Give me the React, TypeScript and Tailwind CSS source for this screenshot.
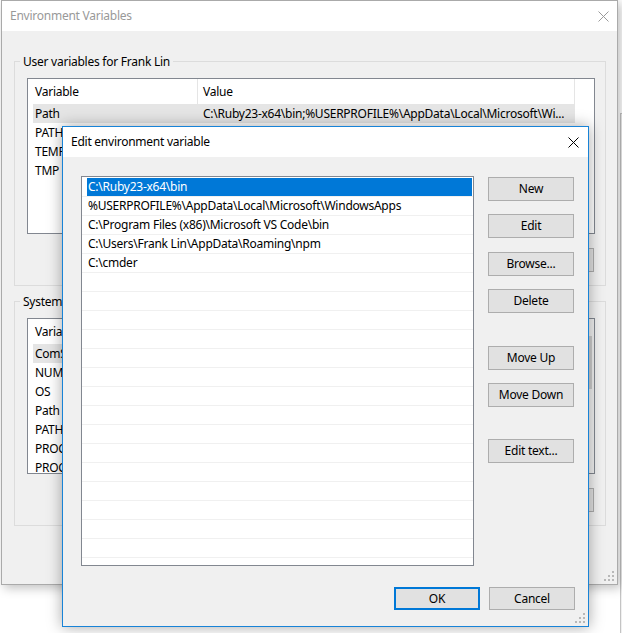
import type { ReactNode } from 'react';

const font = { fontFamily: '"Noto Sans", "Liberation Sans", sans-serif' };

const userVars = [
  ['Path', 'C:\\Ruby23-x64\\bin;%USERPROFILE%\\AppData\\Local\\Microsoft\\Wi...'],
  ['PATHEXT', '.COM;.EXE;.BAT;.CMD;.VBS;.VBE;.JS;.JSE;.WSF;.WSH;.MSC;.RB;.RBW'],
  ['TEMP', '%USERPROFILE%\\AppData\\Local\\Temp'],
  ['TMP', '%USERPROFILE%\\AppData\\Local\\Temp'],
];

const systemVars = [
  ['ComSpec', 'C:\\WINDOWS\\system32\\cmd.exe'],
  ['NUMBER_OF_PROCESSORS', '4'],
  ['OS', 'Windows_NT'],
  ['Path', 'C:\\ProgramData\\Oracle\\Java\\javapath;C:\\WINDOWS\\system32;...'],
  ['PATHEXT', '.COM;.EXE;.BAT;.CMD;.VBS;.VBE;.JS;.JSE;.WSF;.WSH;.MSC'],
  ['PROCESSOR_ARCHITECTURE', 'AMD64'],
  ['PROCESSOR_IDENTIFIER', 'Intel64 Family 6 Model 61 Stepping 4, GenuineIntel'],
];

const paths = [
  'C:\\Ruby23-x64\\bin',
  '%USERPROFILE%\\AppData\\Local\\Microsoft\\WindowsApps',
  'C:\\Program Files (x86)\\Microsoft VS Code\\bin',
  'C:\\Users\\Frank Lin\\AppData\\Roaming\\npm',
  'C:\\cmder',
];

const CloseIcon = ({ color }: { color: string }) => (
  <svg width="11" height="11" viewBox="0 0 11 11">
    <path d="M0.5 0.5 L10.5 10.5 M10.5 0.5 L0.5 10.5" stroke={color} strokeWidth="1" />
  </svg>
);

const Grip = () => (
  <svg width="11" height="11" viewBox="0 0 11 11" className="absolute right-[2px] bottom-[2px]">
    <rect x="8" y="0" width="2" height="2" fill="#b8b8b8" />
    <rect x="4" y="4" width="2" height="2" fill="#b8b8b8" />
    <rect x="8" y="4" width="2" height="2" fill="#b8b8b8" />
    <rect x="0" y="8" width="2" height="2" fill="#b8b8b8" />
    <rect x="4" y="8" width="2" height="2" fill="#b8b8b8" />
    <rect x="8" y="8" width="2" height="2" fill="#b8b8b8" />
  </svg>
);

const WinButton = ({ children, primary, className = '' }: { children: ReactNode; primary?: boolean; className?: string }) => (
  <button
    className={`flex w-[86px] items-center justify-center bg-[#e1e1e1] text-[12px] text-black ${
      primary ? 'border-2 border-[#0078d7]' : 'border border-[#adadad]'
    } ${className}`}
  >
    {children}
  </button>
);

const VarList = ({ rows, scrollbar }: { rows: string[][]; scrollbar?: boolean }) => (
  <div className="relative flex h-[156px] w-[568px] overflow-hidden border border-[#828790] bg-white">
    <div className="flex-1">
      <div className="flex h-[25px] items-center">
        <div className="flex h-full w-[170px] items-center border-r border-[#e5e5e5] pl-[7px]">Variable</div>
        <div className="flex h-full w-[377px] items-center border-r border-[#e5e5e5] pl-[5px]">Value</div>
      </div>
      {rows.map(([name, value], i) => (
        <div key={name + i} className="h-[19px] pl-[5px]">
          <div className={`flex h-full w-[542px] items-center whitespace-nowrap ${i === 0 ? 'bg-[#e5e5e5]' : ''}`}>
            <div className="w-[170px] shrink-0 overflow-hidden pl-[2px]">{name}</div>
            <div className="overflow-hidden">{value}</div>
          </div>
        </div>
      ))}
    </div>
    {scrollbar && (
      <div className="w-[17px] shrink-0 bg-[#f0f0f0] pt-[17px]">
        <div className="mx-[2px] h-[53px] bg-[#cdcdcd]" />
      </div>
    )}
  </div>
);

const GroupBox = ({ title, children, className = '' }: { title: string; children: ReactNode; className?: string }) => (
  <fieldset className={`w-[592px] border border-[#dcdcdc] pr-[10px] pb-[13px] pl-[12px] ${className}`}>
    <legend className="ml-[-7px] px-[3px] text-[12px] leading-[17px]">{title}</legend>
    {children}
  </fieldset>
);

const SideButtons = () => (
  <div className="mt-[14px] flex justify-end gap-[9px] pr-px">
    <WinButton className="h-[24px] w-[75px]">New...</WinButton>
    <WinButton className="h-[24px] w-[75px]">Edit...</WinButton>
    <WinButton className="h-[24px] w-[75px]">Delete</WinButton>
  </div>
);

export default function App() {
  return (
    <div
      className="relative h-[633px] w-[622px] overflow-hidden bg-white text-[12px] tracking-[-0.25px] text-black"
      style={font}
    >
      {/* window further back */}
      <div className="absolute top-[113px] left-[620px] h-[520px] w-[10px] border-t border-l border-[#c4c4c4] bg-[#f0f0f0]" />

      {/* Environment Variables (inactive) */}
      <div className="relative ml-px h-[585px] w-[617px] border border-[#aaaaaa] bg-[#f0f0f0] shadow-[3px_3px_10px_rgba(0,0,0,0.25)]">
        <div className="flex h-[30px] items-center justify-between bg-white pr-[8px] pl-[8px]">
          <span className="text-[12px] text-[#999999]">Environment Variables</span>
          <CloseIcon color="#9a9a9a" />
        </div>
        <div className="pl-[12px]">
          <GroupBox title="User variables for Frank Lin" className="mt-[22px]">
            <div className="mt-[8px]">
              <VarList rows={userVars} />
            </div>
            <SideButtons />
          </GroupBox>
          <GroupBox title="System variables" className="mt-[7px]">
            <div className="mt-[8px]">
              <VarList rows={systemVars} scrollbar />
            </div>
            <SideButtons />
          </GroupBox>
        </div>
        <Grip />
      </div>

      {/* Edit environment variable (active) */}
      <div className="absolute top-[126px] left-[62px] flex h-[501px] w-[527px] flex-col border border-[#1883d7] bg-[#f0f0f0] shadow-[0_0_14px_rgba(0,0,0,0.35)]">
        <div className="flex h-[30px] shrink-0 items-center justify-between bg-white pr-[9px] pl-[8px]">
          <span>Edit environment variable</span>
          <CloseIcon color="#000000" />
        </div>
        <div className="flex pl-[18px]">
          <div className="mt-[19px] h-[390px] w-[393px] border border-[#828790] bg-white pt-px">
            {Array.from({ length: 20 }).map((_, i) => (
              <div key={i} className="h-[19px] border-b border-[#f0f0f0] pr-px pl-[5px]">
                <div
                  className={`flex h-full items-center px-px whitespace-nowrap ${
                    i === 0 ? 'bg-[#0078d7] text-white' : ''
                  }`}
                >
                  {paths[i] ?? ''}
                </div>
              </div>
            ))}
          </div>
          <div className="mt-[20px] ml-[14px] flex flex-col">
            <WinButton className="h-[24px]">New</WinButton>
            <WinButton className="mt-[13px] h-[24px]">Edit</WinButton>
            <WinButton className="mt-[14px] h-[24px]">Browse...</WinButton>
            <WinButton className="mt-[13px] h-[24px]">Delete</WinButton>
            <WinButton className="mt-[33px] h-[24px]">Move Up</WinButton>
            <WinButton className="mt-[13px] h-[24px]">Move Down</WinButton>
            <WinButton className="mt-[32px] h-[24px]">Edit text...</WinButton>
          </div>
        </div>
        <div className="mt-[21px] flex justify-end gap-[9px] pr-[13px]">
          <WinButton primary className="h-[23px]">OK</WinButton>
          <WinButton className="h-[23px]">Cancel</WinButton>
        </div>
        <Grip />
      </div>
    </div>
  );
}
